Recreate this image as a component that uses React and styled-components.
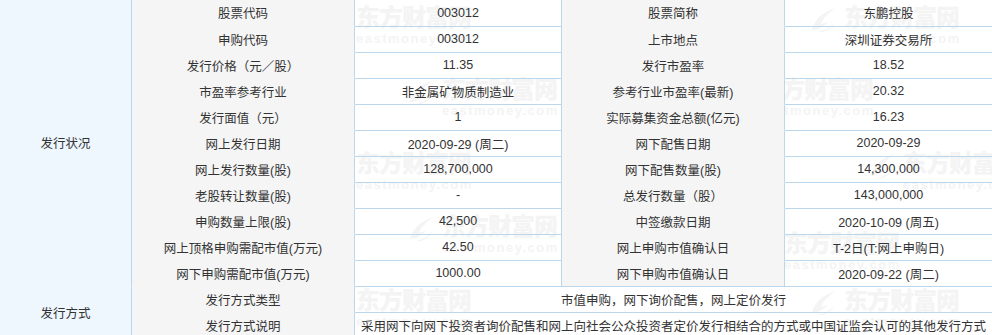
import React from 'react';
import styled, { createGlobalStyle } from 'styled-components';

const GlobalStyle = createGlobalStyle`
  html, body {
    margin: 0;
    padding: 0;
    background: #fff;
    overflow: hidden;
  }
  body {
    font-family: "Liberation Sans", "Noto Sans CJK SC", sans-serif;
    font-size: 12.5px;
    color: #333;
  }
`;

const Page = styled.div`
  position: relative;
  width: 993px;
`;

const Watermarks = styled.div`
  position: absolute;
  inset: 0;
  z-index: 0;
  overflow: hidden;
  pointer-events: none;
`;

const Mark = styled.div`
  position: absolute;
  display: flex;
  align-items: flex-start;
  gap: 4px;
  color: #f4f4f4;
`;

const MarkText = styled.div`
  display: flex;
  flex-direction: column;
  line-height: 1;
`;

const Brand = styled.span`
  font-family: "Noto Sans CJK SC", sans-serif;
  font-weight: 900;
  font-size: 24px;
  letter-spacing: -1px;
`;

const Domain = styled.span`
  font-family: "Liberation Sans", sans-serif;
  font-weight: 700;
  font-size: 13px;
  letter-spacing: 1.5px;
  margin-top: 4px;
`;

const Grid = styled.div`
  position: relative;
  z-index: 1;
  display: grid;
  grid-template-columns: 132px 223px 207px 223px 208px;
  grid-template-rows: 27px repeat(12, 26px);
`;

const Cell = styled.div`
  box-sizing: border-box;
  display: flex;
  align-items: center;
  justify-content: center;
  padding: 0 2px 1px;
  white-space: nowrap;
  border-right: 1px solid #bcd6ec;
`;

const Group = styled(Cell)`
  grid-row: span ${({ $rows }) => $rows};
  background: #eef6fe;
  border-bottom: 1px solid transparent;
`;

const Label = styled(Cell)`
  background: #f5f5f5;
  border-bottom: 1px solid ${({ $edge }) => ($edge ? '#bcd6ec' : 'transparent')};
`;

const Value = styled(Cell)`
  grid-column: span ${({ $span }) => $span || 1};
  border-bottom: 1px solid #bcd6ec;
`;

const Logo = () => (
  <svg width="34" height="30" viewBox="0 0 34 30" fill="currentColor">
    <path d="M6 26 C8 16 16 8 30 4 C22 9 17 14 15 20 L22 18 C18 22 12 26 6 26 Z" />
    <path d="M12 28 C18 27 24 24 28 18 C26 24 20 29 12 28 Z" />
  </svg>
);

const marks = [
  [318, 4], [806, 4],
  [404, 76], [720, 76],
  [318, 150], [865, 150],
  [404, 213], [746, 230],
  [318, 287], [806, 287],
];

const rows = [
  ['股票代码', '003012', '股票简称', '东鹏控股'],
  ['申购代码', '003012', '上市地点', '深圳证券交易所'],
  ['发行价格（元／股）', '11.35', '发行市盈率', '18.52'],
  ['市盈率参考行业', '非金属矿物质制造业', '参考行业市盈率(最新)', '20.32'],
  ['发行面值（元）', '1', '实际募集资金总额(亿元)', '16.23'],
  ['网上发行日期', '2020-09-29 (周二)', '网下配售日期', '2020-09-29'],
  ['网上发行数量(股)', '128,700,000', '网下配售数量(股)', '14,300,000'],
  ['老股转让数量(股)', '-', '总发行数量（股）', '143,000,000'],
  ['申购数量上限(股)', '42,500', '中签缴款日期', '2020-10-09 (周五)'],
  ['网上顶格申购需配市值(万元)', '42.50', '网上申购市值确认日', 'T-2日(T:网上申购日)'],
  ['网下申购需配市值(万元)', '1000.00', '网下申购市值确认日', '2020-09-22 (周二)'],
];

const methods = [
  ['发行方式类型', '市值申购，网下询价配售，网上定价发行'],
  ['发行方式说明', '采用网下向网下投资者询价配售和网上向社会公众投资者定价发行相结合的方式或中国证监会认可的其他发行方式'],
];

export default function App() {
  return (
    <>
      <GlobalStyle />
      <Page>
        <Watermarks aria-hidden="true">
          {marks.map(([x, y], i) => (
            <Mark key={i} style={{ left: x, top: y }}>
              <Logo />
              <MarkText>
                <Brand>东方财富网</Brand>
                <Domain>eastmoney.com</Domain>
              </MarkText>
            </Mark>
          ))}
        </Watermarks>
        <Grid>
          <Group $rows={rows.length}>发行状况</Group>
          {rows.map((r, i) => (
            <React.Fragment key={r[0]}>
              <Label>{r[0]}</Label>
              <Value>{r[1]}</Value>
              <Label $edge={i === rows.length - 1}>{r[2]}</Label>
              <Value>{r[3]}</Value>
            </React.Fragment>
          ))}
          <Group $rows={methods.length}>发行方式</Group>
          {methods.map(m => (
            <React.Fragment key={m[0]}>
              <Label>{m[0]}</Label>
              <Value $span={3}>{m[1]}</Value>
            </React.Fragment>
          ))}
        </Grid>
      </Page>
    </>
  );
}
